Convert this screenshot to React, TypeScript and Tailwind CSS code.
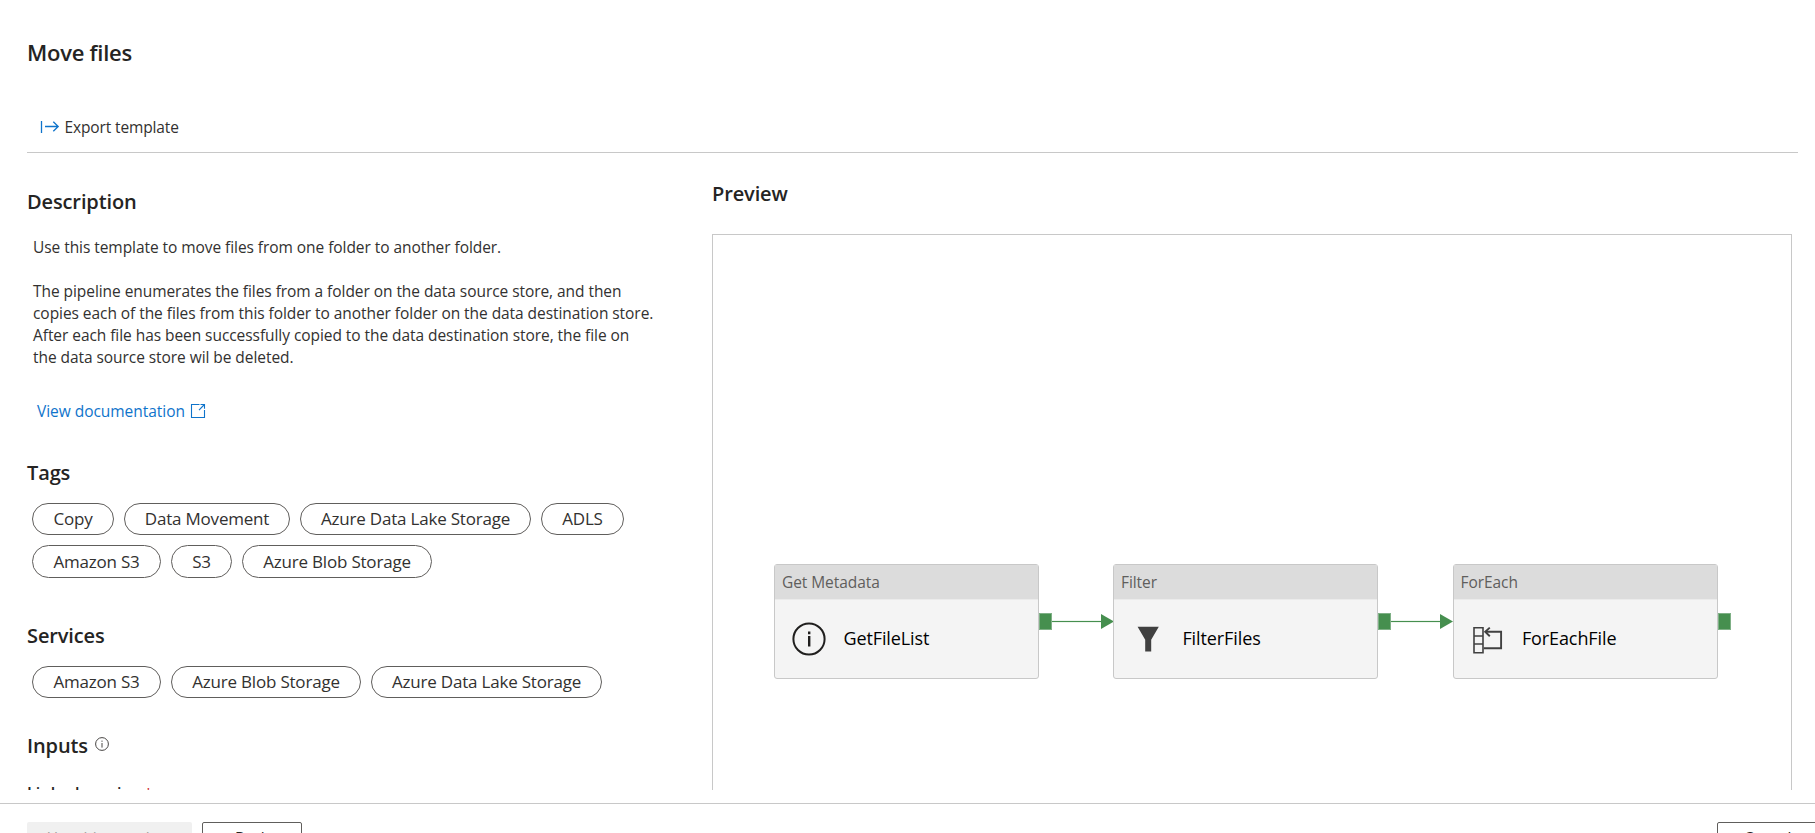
import type { ReactNode } from "react";

type Chip = { label: string; width: string };

const TAGS: Chip[] = [
  { label: "Copy", width: "w-[82px]" },
  { label: "Data Movement", width: "w-[166px]" },
  { label: "Azure Data Lake Storage", width: "w-[231px]" },
  { label: "ADLS", width: "w-[83px]" },
  { label: "Amazon S3", width: "w-[129px]" },
  { label: "S3", width: "w-[61px]" },
  { label: "Azure Blob Storage", width: "w-[190px]" },
];

const SERVICES: Chip[] = [
  { label: "Amazon S3", width: "w-[129px]" },
  { label: "Azure Blob Storage", width: "w-[190px]" },
  { label: "Azure Data Lake Storage", width: "w-[231px]" },
];

function Heading({ children }: { children: ReactNode }) {
  return <h2 className="text-[20px] leading-7 font-semibold tracking-[-0.12px]">{children}</h2>;
}

function ChipList({ items }: { items: Chip[] }) {
  return (
    <ul className="ml-[5px] flex w-[640px] flex-wrap gap-[10px]">
      {items.map((c) => (
        <li
          key={c.label}
          className={`flex h-[32.4px] items-center justify-center rounded-full border border-[#605e5c] text-[17px] tracking-[-0.2px] whitespace-nowrap text-[#323130] ${c.width}`}
        >
          {c.label}
        </li>
      ))}
    </ul>
  );
}

function ExportIcon() {
  return (
    <svg width="20" height="14" viewBox="0 0 20 14" fill="none" stroke="#0f74cb" strokeWidth="1.3">
      <path d="M1.5 1v12M5 6.500h13M13.3 1.7 18.2 6.5l-4.9 4.8" />
    </svg>
  );
}

function OpenIcon() {
  return (
    <svg width="16" height="16" viewBox="0 0 16 16" fill="none" stroke="#0f74cb" strokeWidth="1.1">
      <path d="M9.5 1.5h-8v13h13V7" />
      <path d="M9 7.2l5.4-5.7M10.5 1.5h4v4.2" />
    </svg>
  );
}

function SmallInfoIcon() {
  return (
    <svg width="14" height="14" viewBox="0 0 14 14" fill="none" stroke="#484644">
      <circle cx="7" cy="7" r="6.4" strokeWidth="1" />
      <path d="M7 6v4.6M7 3.6v1.2" strokeWidth="1" />
    </svg>
  );
}

function InfoIcon() {
  return (
    <svg width="36" height="36" viewBox="0 0 36 36" fill="none" stroke="#201f1e">
      <circle cx="18" cy="18" r="15.6" strokeWidth="2" />
      <path d="M18.2 15v10.6M18.2 10.6v2.6" strokeWidth="2.4" />
    </svg>
  );
}

function FilterIcon() {
  return (
    <svg width="36" height="36" viewBox="0 0 36 36" fill="#404040">
      <path d="M7.6 5.8h21.2l-7.6 13v11.7h-6V18.8z" />
    </svg>
  );
}

function LoopIcon() {
  return (
    <svg width="36" height="36" viewBox="0 0 36 36" fill="none" stroke="#404040" strokeWidth="1.6">
      <path d="M4 6.8h9v25H4zM4 15h9M4 23h9" />
      <path d="M15.5 10.8h15.6v16.5H13.8" strokeWidth="1.9" />
      <path d="M19.8 6.6l-4.6 4.2 4.6 4.5" strokeWidth="1.9" />
    </svg>
  );
}

function Activity({ kind, name, icon, place }: { kind: string; name: string; icon: ReactNode; place: string }) {
  return (
    <div className={`absolute top-[329px] h-[115px] w-[265px] rounded-[3px] border border-[#c8c8c8] bg-[#f4f4f4] ${place}`}>
      <div className="h-[35px] border-b border-[#ebebeb] bg-[#dcdcdc] pt-[6px] pl-[7px] text-[15.5px] leading-[22px] tracking-[-0.07px] text-[#605e5c]">
        {kind}
      </div>
      <div className="flex items-center pt-[21px] pl-[16px]">
        {icon}
        <span className="mb-[2px] ml-[16.4px] text-[18px] leading-6 tracking-[-0.1px] text-black">{name}</span>
      </div>
    </div>
  );
}

function Connector({ place, open }: { place: string; open?: boolean }) {
  return (
    <svg className={`absolute top-[378px] ${place}`} width="76" height="17" viewBox="0 0 76 17">
      <rect x="0.5" y="0.5" width="12" height="16" fill="#468f4f" stroke="#7fb086" />
      {!open && (
        <>
          <path d="M13 7.5h50v2H13z" fill="#dcebdd" />
          <path d="M13 8h50v1H13z" fill="#468f4f" />
          <path d="M62 1l13 7.5-13 7.5z" fill="#468f4f" />
        </>
      )}
    </svg>
  );
}

export default function App() {
  return (
    <div className="flex h-[833px] flex-col overflow-hidden bg-white font-['Open_Sans',sans-serif] text-[#252423]">
      <main className="h-[790px] shrink-0 overflow-hidden pr-[17px] pl-[27px]">
        <header className="h-[153px] border-b border-[#c8c8c8] pt-[37px]">
          <h1 className="text-[22px] leading-[30px] font-semibold tracking-[-0.25px]">Move files</h1>
          <button className="mt-[49px] ml-[12.5px] flex items-center text-[15.5px] leading-[22px] tracking-[-0.13px] text-[#323130]">
            <ExportIcon />
            <span className="ml-[5px]">Export template</span>
          </button>
        </header>

        <div className="flex">
          <section className="w-[685px] shrink-0 pt-[35px]">
            <Heading>Description</Heading>
            <div className="mt-5 ml-[6px] text-[15.5px] leading-[22px] tracking-[-0.06px] whitespace-nowrap text-[#323130]">
              <p>Use this template to move files from one folder to another folder.</p>
              <p className="mt-[22px]">
                The pipeline enumerates the files from a folder on the data source store, and then
                <br />
                copies each of the files from this folder to another folder on the data destination store.
                <br />
                After each file has been successfully copied to the data destination store, the file on
                <br />
                the data source store wil be deleted.
              </p>
            </div>
            <a className="mt-8 ml-[10px] flex items-center text-[15.5px] leading-[22px] tracking-[-0.04px] text-[#0f74cb]">
              View documentation
              <span className="ml-[5px]">
                <OpenIcon />
              </span>
            </a>

            <div className="mt-[37px]">
              <Heading>Tags</Heading>
            </div>
            <div className="mt-[16px]">
              <ChipList items={TAGS} />
            </div>

            <div className="mt-[44px]">
              <Heading>Services</Heading>
            </div>
            <div className="mt-[16px]">
              <ChipList items={SERVICES} />
            </div>

            <div className="mt-[34px] flex items-start">
              <Heading>Inputs</Heading>
              <span className="mt-[5px] ml-[7px]">
                <SmallInfoIcon />
              </span>
            </div>
            <p className="mt-[22px] flex gap-[5px] text-[16px] leading-[22px] font-semibold tracking-[0.15px] whitespace-nowrap">
              Linked service <span className="pt-px font-normal text-[#d13438]">*</span>
            </p>
          </section>

          <section className="w-[1080px] shrink-0 pt-[27px]">
            <Heading>Preview</Heading>
            <div className="relative mt-[26px] h-[640px] border border-[#c8c8c8]">
              <Activity place="left-[61px]" kind="Get Metadata" name="GetFileList" icon={<InfoIcon />} />
              <Connector place="left-[326px]" />
              <Activity place="left-[400px]" kind="Filter" name="FilterFiles" icon={<FilterIcon />} />
              <Connector place="left-[665px]" />
              <Activity place="left-[739.5px]" kind="ForEach" name="ForEachFile" icon={<LoopIcon />} />
              <Connector place="left-[1005px]" open />
            </div>
          </section>
        </div>
      </main>

      <footer className="mt-[13px] flex shrink-0 border-t border-[#c8c8c8] pt-[18px] pl-[27px] text-[15.5px] tracking-[-0.07px]">
        <button className="h-8 w-[165px] shrink-0 rounded-[2px] bg-[#f0f0f0] pt-[2px] text-[#a19f9d]">Use this template</button>
        <button className="ml-[10px] h-8 w-[100px] shrink-0 rounded-[2px] border border-[#605e5c] pt-[2px]">Back</button>
        <button className="ml-[1415px] h-8 w-[101px] shrink-0 rounded-[2px] border border-[#605e5c] pt-[2px]">Cancel</button>
      </footer>
    </div>
  );
}
